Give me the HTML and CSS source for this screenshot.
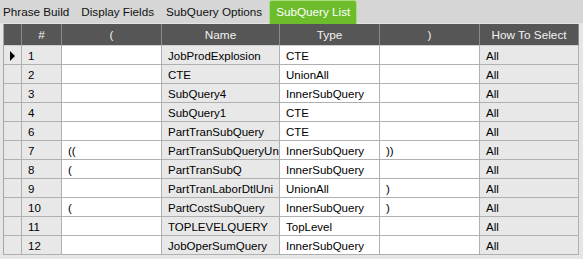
FILE: index.html
```html
<!DOCTYPE html>
<html lang="en">
<head>
    <meta charset="UTF-8">
    <title>SubQuery List</title>
    <link rel="stylesheet" href="styles.css">
</head>
<body>
    <!-- Tabs -->
    <div class="tabs">
        <div class="tab">Phrase Build</div>
        <div class="tab">Display Fields</div>
        <div class="tab">SubQuery Options</div>
        <div class="tab active">SubQuery List</div>
    </div>

    <!-- Grid -->
    <div class="grid-wrap">
        <table class="grid">
            <colgroup>
                <col class="c-ind">
                <col class="c-num">
                <col class="c-open">
                <col class="c-name">
                <col class="c-type">
                <col class="c-close">
                <col class="c-how">
            </colgroup>
            <thead>
                <tr>
                    <th></th>
                    <th>#</th>
                    <th>(</th>
                    <th>Name</th>
                    <th>Type</th>
                    <th>)</th>
                    <th>How To Select</th>
                </tr>
            </thead>
            <tbody>
                <tr class="current"><td class="ind"><span class="arrow"></span></td><td class="gray">1</td><td></td><td class="gray">JobProdExplosion</td><td>CTE</td><td></td><td class="gray">All</td></tr>
                <tr><td class="ind"></td><td class="gray">2</td><td></td><td class="gray">CTE</td><td>UnionAll</td><td></td><td class="gray">All</td></tr>
                <tr><td class="ind"></td><td class="gray">3</td><td></td><td class="gray">SubQuery4</td><td>InnerSubQuery</td><td></td><td class="gray">All</td></tr>
                <tr><td class="ind"></td><td class="gray">4</td><td></td><td class="gray">SubQuery1</td><td>CTE</td><td></td><td class="gray">All</td></tr>
                <tr><td class="ind"></td><td class="gray">6</td><td></td><td class="gray">PartTranSubQuery</td><td>CTE</td><td></td><td class="gray">All</td></tr>
                <tr><td class="ind"></td><td class="gray">7</td><td>((</td><td class="gray">PartTranSubQueryUn</td><td>InnerSubQuery</td><td>))</td><td class="gray">All</td></tr>
                <tr><td class="ind"></td><td class="gray">8</td><td>(</td><td class="gray">PartTranSubQ</td><td>InnerSubQuery</td><td></td><td class="gray">All</td></tr>
                <tr><td class="ind"></td><td class="gray">9</td><td></td><td class="gray">PartTranLaborDtlUni</td><td>UnionAll</td><td>)</td><td class="gray">All</td></tr>
                <tr><td class="ind"></td><td class="gray">10</td><td>(</td><td class="gray">PartCostSubQuery</td><td>InnerSubQuery</td><td>)</td><td class="gray">All</td></tr>
                <tr><td class="ind"></td><td class="gray">11</td><td></td><td class="gray">TOPLEVELQUERY</td><td>TopLevel</td><td></td><td class="gray">All</td></tr>
                <tr><td class="ind"></td><td class="gray">12</td><td></td><td class="gray">JobOperSumQuery</td><td>InnerSubQuery</td><td></td><td class="gray">All</td></tr>
            </tbody>
        </table>
    </div>
</body>
</html>
```

FILE: styles.css
```css
* {
    margin: 0;
    padding: 0;
    box-sizing: border-box;
}

body {
    font-family: "Liberation Sans", Arial, sans-serif;
    font-size: 11.5px;
    background: #e6e6e6;
    width: 583px;
    height: 259px;
    overflow: hidden;
}

/* Tabs */
.tabs {
    display: flex;
    align-items: flex-end;
    height: 24px;
    background: #d6d6d6;
    border-bottom: 1px solid #e4e4e4;
    font-size: 11.7px;
}

.tab {
    padding: 0 6px;
    height: 23px;
    line-height: 23px;
    color: #111;
    white-space: nowrap;
}

.tab:first-child {
    padding-left: 3px;
}

.tab.active {
    margin-left: 1px;
    padding: 0 6px;
    height: 24px;
    line-height: 21px;
    color: #fff;
    background: #6cbc2b;
    border: 1px solid #a9dc7c;
    border-bottom: none;
    border-radius: 3px 3px 0 0;
    margin-bottom: -1px;
}

/* Grid */
.grid-wrap {
    padding-left: 3px;
}

.grid {
    border-collapse: separate;
    border-spacing: 0;
    table-layout: fixed;
    width: 576px;
    border-left: 1px solid #a8a8a8;
}

.c-ind { width: 18px; }
.c-num { width: 40px; }
.c-open { width: 100px; }
.c-name { width: 118px; }
.c-type { width: 100px; }
.c-close { width: 100px; }
.c-how { width: 99px; }

.grid th {
    height: 22px;
    padding-top: 1px;
    background: #565656;
    color: #f2f2f2;
    font-size: 11.8px;
    font-weight: normal;
    text-align: center;
    border-right: 1px solid #8a8a8a;
    border-bottom: 1px solid #d0d0d0;
}

.grid td {
    height: 19px;
    padding: 1px 0 0 6px;
    background: #fff;
    color: #000;
    white-space: nowrap;
    overflow: hidden;
    border-right: 1px solid #b0b0b0;
    border-bottom: 1px solid #b0b0b0;
}

.grid td.gray,
.grid td.ind {
    background: #e8e8e8;
}

.grid td.ind {
    padding: 0;
    text-align: center;
}

.arrow {
    display: inline-block;
    width: 0;
    height: 0;
    border-top: 5px solid transparent;
    border-bottom: 5px solid transparent;
    border-left: 5px solid #000;
    vertical-align: middle;
}
```
